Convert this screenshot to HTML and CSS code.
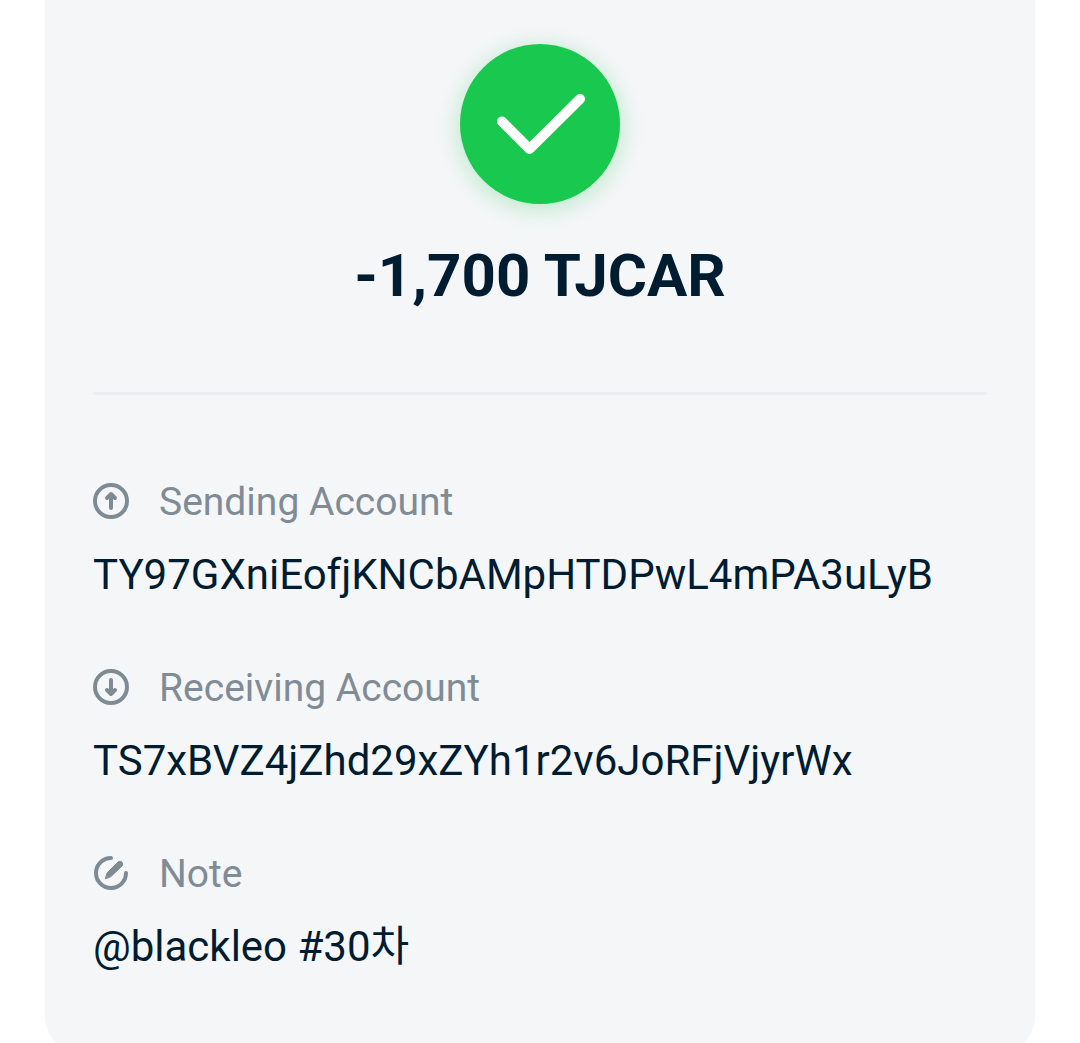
FILE: index.html
```html
<!DOCTYPE html>
<html lang="en">
<head>
  <meta charset="UTF-8" />
  <meta name="viewport" content="width=device-width, initial-scale=1.0"/>
  <title>Transaction Details</title>
  <link rel="stylesheet" href="styles.css">
</head>
<body>
  <main class="receipt">
    <header class="summary">
      <div class="status">
        <svg viewBox="0 0 160 160" fill="none" stroke="#fff" stroke-width="10" stroke-linecap="round" stroke-linejoin="round" role="img" aria-label="Success">
          <path d="M42 77.500 L69.500 105 L120 55" />
        </svg>
      </div>
      <h1>-1,700 TJCAR</h1>
    </header>

    <dl class="details">
      <div class="detail">
        <dt>
          <svg class="icon" viewBox="0 0 36 36" aria-hidden="true">
            <circle cx="18" cy="17" r="16" />
            <path d="M18 24 V11 M14 14 L18 10 L22 14" />
          </svg>
          Sending Account
        </dt>
        <dd>TY97GXniEofjKNCbAMpHTDPwL4mPA3uLyB</dd>
      </div>

      <div class="detail">
        <dt>
          <svg class="icon" viewBox="0 0 36 36" aria-hidden="true">
            <circle cx="18" cy="17" r="16" />
            <path d="M18 10 V23 M14 20 L18 24 L22 20" />
          </svg>
          Receiving Account
        </dt>
        <dd>TS7xBVZ4jZhd29xZYh1r2v6JoRFjVjyrWx</dd>
      </div>

      <div class="detail">
        <dt>
          <svg class="icon" viewBox="0 0 36 36" aria-hidden="true">
            <path d="M18 2 A15 15 0 1 0 33 17" />
            <path class="pen" d="M12.500 22.500 L14 17 L25 6 Q27 4.500 29 6 Q30.500 8 29 10 L18 20.500 Z" />
          </svg>
          Note
        </dt>
        <dd>@blackleo #30차</dd>
      </div>
    </dl>
  </main>
</body>
</html>
```

FILE: styles.css
```css
* {
  box-sizing: border-box;
}

body {
  margin: 0;
  font-family: Roboto, "Noto Sans CJK KR", sans-serif;
  background: #fff;
  color: #001c31;
}

.receipt {
  margin: 0 45px;
  padding: 44px 48px 76px;
  background: #f5f6f8;
  border-radius: 0 0 36px 36px;
}

.summary {
  display: flex;
  flex-direction: column;
  align-items: center;
  gap: 36px;
  padding-bottom: 80px;
  border-bottom: 3px solid #ebedf0;
}

.status {
  width: 160px;
  height: 160px;
  border-radius: 50%;
  background: #19c84e;
  box-shadow: 0 4px 24px rgba(25, 200, 78, 0.3);
}

h1 {
  margin: 0;
  font-size: 60px;
  line-height: 72px;
  font-weight: 700;
}

.details {
  display: flex;
  flex-direction: column;
  gap: 58px;
  margin: 0;
  padding-top: 82px;
}

dt {
  display: flex;
  align-items: center;
  gap: 30px;
  font-size: 39px;
  line-height: 50px;
  color: #7f8b95;
}

.icon {
  width: 36px;
  height: 36px;
  overflow: visible;
  fill: none;
  stroke: #7d8b95;
  stroke-width: 4;
  stroke-linecap: round;
  stroke-linejoin: round;
}

.icon .pen {
  fill: #7d8b95;
  stroke-width: 1;
}

dd {
  margin: 18px 0 0;
  font-size: 42px;
  line-height: 60px;
  overflow-wrap: anywhere;
}
```
